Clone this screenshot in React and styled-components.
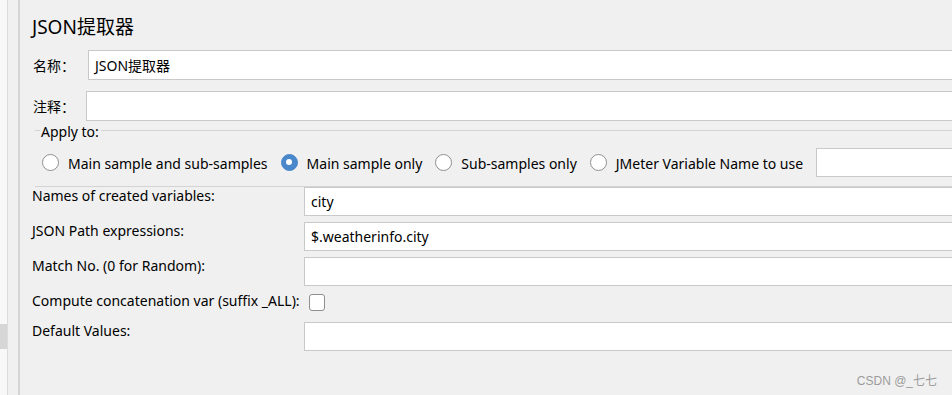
import React from 'react';
import styled, { createGlobalStyle } from 'styled-components';

const GlobalStyle = createGlobalStyle`
  html, body {
    margin: 0;
    padding: 0;
    overflow: hidden;
    background: #f0f0f0;
  }
`;

const FONT = `"Noto Sans", "Noto Sans CJK SC", sans-serif`;

const Window = styled.div`
  position: relative;
  display: flex;
  width: 962px;
  height: 395px;
  background: #f0f0f0;
  font-family: ${FONT};
  font-size: 14px;
  color: #000;
`;

const Gutter = styled.div`
  display: flex;
  flex-direction: column;
  width: 7px;
  background: #f8f8f8;
`;

const Thumb = styled.div`
  margin-top: 324px;
  height: 25px;
  background: #d6d6d6;
`;

const Splitter = styled.div`
  width: 10px;
  border-left: 1px solid #dcdcdc;
  border-right: 2px solid #d4d4d4;
  background: #f0f0f0;
`;

const Panel = styled.div`
  flex: 1;
  display: flex;
  flex-direction: column;
  padding-left: 12px;
`;

const Title = styled.h1`
  margin: 0;
  padding-top: 15px;
  font-size: 19px;
  font-weight: normal;
  line-height: 25px;
`;

const NameRow = styled.div`
  display: flex;
  align-items: center;
  height: 30px;
  margin-top: ${(p) => p.$gap}px;
`;

const NameLabel = styled.span`
  width: ${(p) => p.$width}px;
  padding-left: 1px;
  box-sizing: border-box;
  flex-shrink: 0;
`;

const TextBox = styled.div`
  flex: 1;
  box-sizing: border-box;
  height: ${(p) => p.$height || 29}px;
  display: flex;
  align-items: center;
  padding: 0 6px;
  background: #fff;
  border: 1px solid #c9c9c9;
  white-space: nowrap;
`;

const Group = styled.div`
  margin: 1px 0 0 3px;
  padding-bottom: 10px;
  border-bottom: 1px solid #d3d3d3;
`;

const GroupHeader = styled.div`
  display: flex;
  align-items: center;
  height: 20px;
  line-height: 20px;
  &::before {
    content: '';
    width: 5px;
    height: 1px;
    margin-top: -3px;
    background: #d3d3d3;
  }
  &::after {
    content: '';
    flex: 1;
    height: 1px;
    margin-top: -3px;
    background: #d3d3d3;
  }
`;

const GroupTitle = styled.span`
  padding: 0 2px 0 1px;
`;

const RadioRow = styled.div`
  display: flex;
  align-items: center;
  height: 28px;
  margin-top: 6px;
  padding-left: 7px;
`;

const RadioItem = styled.label`
  display: flex;
  align-items: center;
  gap: 9px;
  margin-right: 13px;
  white-space: nowrap;
`;

const RadioText = styled.span`
  margin-top: 2px;
`;

const RadioDot = styled.span`
  box-sizing: border-box;
  width: 17px;
  height: 17px;
  border-radius: 50%;
  flex-shrink: 0;
  background: ${(p) => (p.$on ? '#4a87cb' : '#fff')};
  border: 1px solid ${(p) => (p.$on ? '#4a87cb' : '#8f8f8f')};
  display: flex;
  align-items: center;
  justify-content: center;
  &::after {
    content: '';
    display: ${(p) => (p.$on ? 'block' : 'none')};
    width: 6px;
    height: 6px;
    border-radius: 50%;
    background: #fff;
  }
`;

const Form = styled.div`
  display: grid;
  grid-template-columns: 272px 1fr;
  grid-auto-rows: auto;
  row-gap: 6px;
`;

const FieldLabel = styled.div`
  line-height: 17px;
  white-space: nowrap;
`;

const CheckCell = styled.div`
  height: 24px;
`;

const CheckBox = styled.span`
  display: block;
  box-sizing: border-box;
  width: 16px;
  height: 17px;
  margin: 2px 0 0 5px;
  background: #fff;
  border: 1px solid #8f8f8f;
  border-radius: 3px;
`;

const Watermark = styled.div`
  position: absolute;
  right: 25px;
  bottom: 7px;
  font-size: 12px;
  color: #9c9c9c;
  font-family: "Liberation Sans", "Noto Sans CJK SC", sans-serif;
`;

const radios = [
  { label: 'Main sample and sub-samples', on: false },
  { label: 'Main sample only', on: true },
  { label: 'Sub-samples only', on: false },
  { label: 'JMeter Variable Name to use', on: false },
];

const fields = [
  { label: 'Names of created variables:', value: 'city' },
  { label: 'JSON Path expressions:', value: '$.weatherinfo.city' },
  { label: 'Match No. (0 for Random):', value: '' },
  { label: 'Compute concatenation var (suffix _ALL):', check: true },
  { label: 'Default Values:', value: '' },
];

export default function App() {
  return (
    <>
      <GlobalStyle />
      <Window>
        <Gutter>
          <Thumb />
        </Gutter>
        <Splitter />
        <Panel>
          <Title>JSON提取器</Title>
          <NameRow $gap={10}>
            <NameLabel $width={56}>名称：</NameLabel>
            <TextBox $height={30}>JSON提取器</TextBox>
          </NameRow>
          <NameRow $gap={11}>
            <NameLabel $width={54}>注释：</NameLabel>
            <TextBox $height={30} />
          </NameRow>
          <Group>
            <GroupHeader>
              <GroupTitle>Apply to:</GroupTitle>
            </GroupHeader>
            <RadioRow>
              {radios.map((r) => (
                <RadioItem key={r.label}>
                  <RadioDot $on={r.on} />
                  <RadioText>{r.label}</RadioText>
                </RadioItem>
              ))}
              <TextBox $height={29} />
            </RadioRow>
          </Group>
          <Form>
            {fields.map((f) => (
              <React.Fragment key={f.label}>
                <FieldLabel>{f.label}</FieldLabel>
                {f.check ? (
                  <CheckCell>
                    <CheckBox />
                  </CheckCell>
                ) : (
                  <TextBox>{f.value}</TextBox>
                )}
              </React.Fragment>
            ))}
          </Form>
        </Panel>
        <Watermark>CSDN @_七七</Watermark>
      </Window>
    </>
  );
}
